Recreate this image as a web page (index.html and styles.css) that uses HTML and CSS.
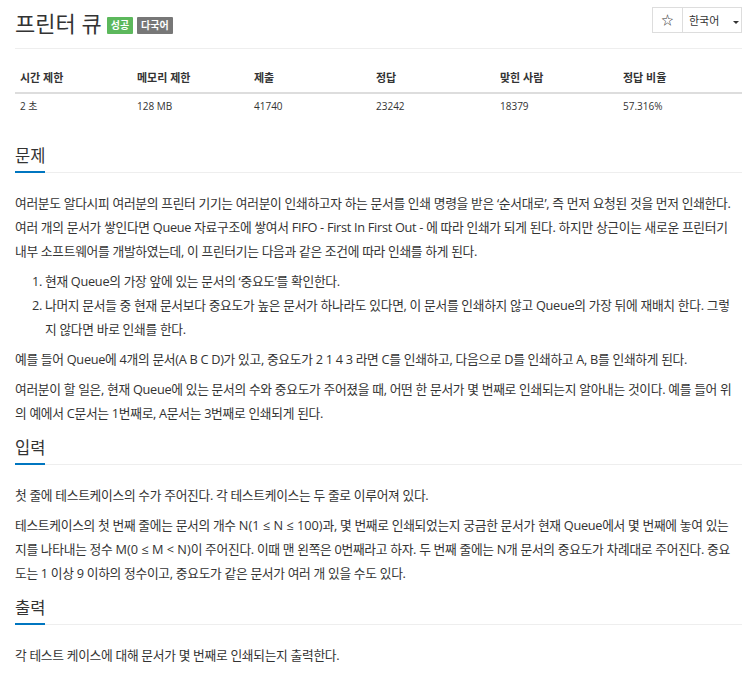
FILE: index.html
```html
<!DOCTYPE html>
<html lang="ko">
<head>
    <meta charset="UTF-8">
    <title>프린터 큐</title>
    <link rel="stylesheet" href="styles.css">
</head>
<body>
    <div class="page">
        <div class="page-header">
            <h1 class="title">
                프린터 큐
                <span class="label label-success">성공</span>
                <span class="label label-default">다국어</span>
            </h1>
            <div class="btn-group">
                <button class="btn btn-star">☆</button>
                <button class="btn btn-lang">한국어 <span class="caret"></span></button>
            </div>
        </div>

        <table class="problem-info">
            <thead>
                <tr>
                    <th>시간 제한</th>
                    <th>메모리 제한</th>
                    <th>제출</th>
                    <th>정답</th>
                    <th>맞힌 사람</th>
                    <th>정답 비율</th>
                </tr>
            </thead>
            <tbody>
                <tr>
                    <td>2 초</td>
                    <td>128 MB</td>
                    <td>41740</td>
                    <td>23242</td>
                    <td>18379</td>
                    <td>57.316%</td>
                </tr>
            </tbody>
        </table>

        <section class="problem-section">
            <div class="headline"><h2>문제</h2></div>
            <div class="problem-text">
                <p>여러분도 알다시피 여러분의 프린터 기기는 여러분이 인쇄하고자 하는 문서를 인쇄 명령을 받은 ‘순서대로’, 즉 먼저 요청된 것을 먼저 인쇄한다. 여러 개의 문서가 쌓인다면 Queue 자료구조에 쌓여서 FIFO - First In First Out - 에 따라 인쇄가 되게 된다. 하지만 상근이는 새로운 프린터기 내부 소프트웨어를 개발하였는데, 이 프린터기는 다음과 같은 조건에 따라 인쇄를 하게 된다.</p>
                <ol>
                    <li>현재 Queue의 가장 앞에 있는 문서의 ‘중요도’를 확인한다.</li>
                    <li>나머지 문서들 중 현재 문서보다 중요도가 높은 문서가 하나라도 있다면, 이 문서를 인쇄하지 않고 Queue의 가장 뒤에 재배치 한다. 그렇지 않다면 바로 인쇄를 한다.</li>
                </ol>
                <p>예를 들어 Queue에 4개의 문서(A B C D)가 있고, 중요도가 2 1 4 3 라면 C를 인쇄하고, 다음으로 D를 인쇄하고 A, B를 인쇄하게 된다.</p>
                <p>여러분이 할 일은, 현재 Queue에 있는 문서의 수와 중요도가 주어졌을 때, 어떤 한 문서가 몇 번째로 인쇄되는지 알아내는 것이다. 예를 들어 위의 예에서 C문서는 1번째로, A문서는 3번째로 인쇄되게 된다.</p>
            </div>
        </section>

        <section class="problem-section">
            <div class="headline"><h2>입력</h2></div>
            <div class="problem-text">
                <p>첫 줄에 테스트케이스의 수가 주어진다. 각 테스트케이스는 두 줄로 이루어져 있다.</p>
                <p>테스트케이스의 첫 번째 줄에는 문서의 개수 <span class="math">N(1 ≤ N ≤ 100)</span>과, 몇 번째로 인쇄되었는지 궁금한 문서가 현재 Queue에서 몇 번째에 놓여 있는지를 나타내는 정수 <span class="math">M(0 ≤ M &lt; N)</span>이 주어진다. 이때 맨 왼쪽은 0번째라고 하자. 두 번째 줄에는 N개 문서의 중요도가 차례대로 주어진다. 중요도는 1 이상 9 이하의 정수이고, 중요도가 같은 문서가 여러 개 있을 수도 있다.</p>
            </div>
        </section>

        <section class="problem-section">
            <div class="headline"><h2>출력</h2></div>
            <div class="problem-text">
                <p>각 테스트 케이스에 대해 문서가 몇 번째로 인쇄되는지 출력한다.</p>
            </div>
        </section>
    </div>
</body>
</html>
```

FILE: styles.css
```css
body {
    margin: 0;
    font-family: 'Open Sans', 'Noto Sans CJK KR', sans-serif;
    color: #333;
    background: #fff;
}
.page {
    width: 727px;
    padding-left: 15px;
}
.page-header {
    display: flex;
    justify-content: space-between;
    align-items: flex-start;
    padding: 7px 0 10px;
    border-bottom: 1px solid #eee;
}
.title {
    display: flex;
    align-items: center;
    gap: 4px;
    margin: 1px 0 0;
    height: 30px;
    font-size: 22px;
    font-weight: 400;
    line-height: 30px;
}
.label {
    margin-top: 5px;
    padding: 0 4px;
    height: 17px;
    line-height: 17px;
    font-size: 10px;
    font-weight: 700;
    color: #fff;
    border-radius: 1px;
}
.label-success {
    background: #5cb85c;
    margin-left: 1px;
}
.label-default {
    background: #777;
}
.btn-group {
    display: flex;
}
.btn {
    height: 26px;
    margin: 0;
    padding: 0 10px;
    background: #fff;
    border: 1px solid #ddd;
    font-family: inherit;
    font-size: 11px;
    color: #333;
}
.btn-star {
    width: 31px;
    padding: 0;
    font-size: 12px;
}
.btn-lang {
    width: 59px;
    border-left: none;
    padding: 0 0 0 6px;
    text-align: left;
}
.caret {
    display: inline-block;
    margin-left: 11px;
    vertical-align: middle;
    border-top: 3px solid #333;
    border-left: 3px solid transparent;
    border-right: 3px solid transparent;
}
.problem-info {
    width: 727px;
    margin: 14px 0 0;
    border-collapse: collapse;
    table-layout: fixed;
    font-size: 10px;
}
.problem-info th,
.problem-info td {
    text-align: left;
    line-height: 17px;
    padding: 6px 5px;
}
.problem-info th {
    font-size: 11px;
    font-weight: 700;
    border-bottom: 2px solid #ddd;
}
.problem-info td {
    padding-top: 4px;
}
.problem-info th:nth-child(1) { width: 107px; }
.problem-info th:nth-child(2) { width: 107px; }
.problem-info th:nth-child(3) { width: 112px; }
.problem-info th:nth-child(4) { width: 114px; }
.problem-info th:nth-child(5) { width: 113px; }
.problem-section {
    margin-top: 12px;
}
.problem-section:first-of-type {
    margin-top: 24px;
}
.headline {
    display: flex;
    border-bottom: 1px solid #eee;
}
.headline h2 {
    margin: 0 0 -1px;
    padding-bottom: 4px;
    font-size: 16.5px;
    font-weight: 400;
    line-height: 22px;
    border-bottom: 2px solid #0076c0;
}
.problem-text {
    margin-top: 18px;
    padding-right: 6px;
    font-size: 12.75px;
    line-height: 24px;
    letter-spacing: -0.3px;
}
.problem-text p {
    margin: 0 0 6px;
}
.problem-text ol {
    margin: 0 0 6px;
    padding-left: 30px;
}
.math {
    letter-spacing: 0;
}
```
